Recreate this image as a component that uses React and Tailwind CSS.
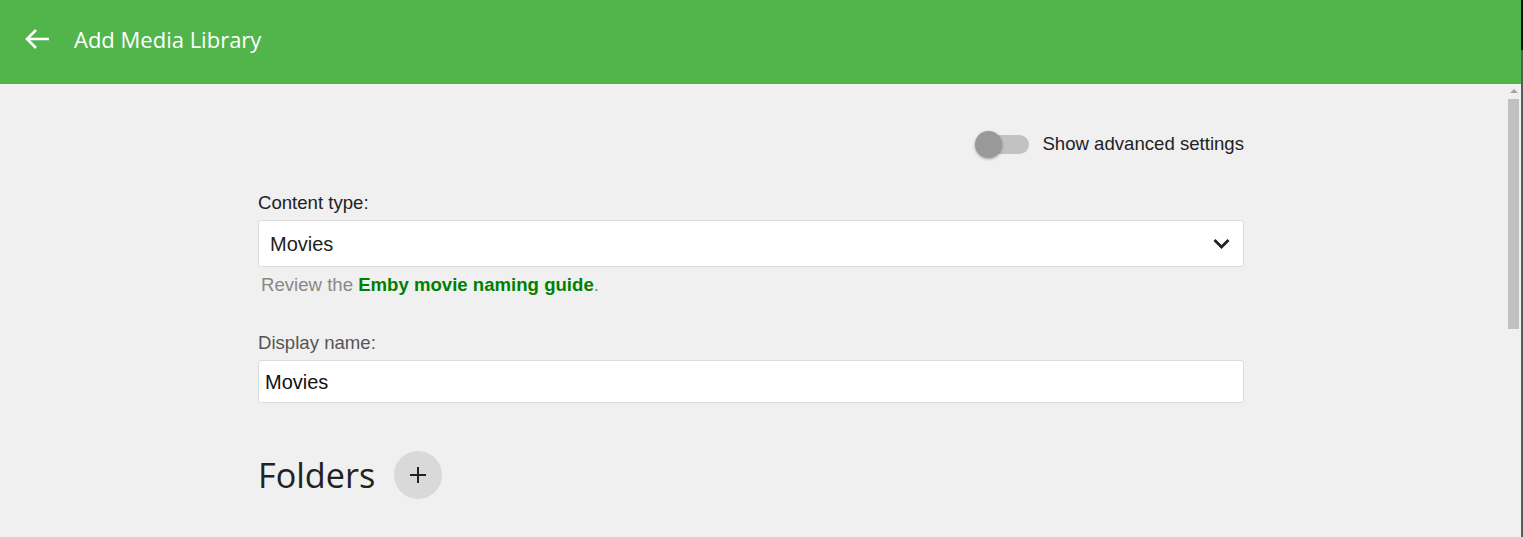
import React from "react";

export default function App() {
  return (
    <div className="w-[1523px] h-[537px] overflow-hidden flex bg-[#f0f0f0]">
      <div className="flex-1 flex flex-col min-w-0">
        <header className="h-[84px] shrink-0 bg-[#52b54b] flex items-center pl-[25px]">
          <svg width="25" height="22" viewBox="0 0 25 22" className="text-white -mt-[6px]">
            <path d="M2 11H24M11 2L2 11l9 9" fill="none" stroke="currentColor" strokeWidth="2.6" strokeLinejoin="miter" />
          </svg>
          <h1 className="ml-[24px] -mt-[6px] text-white text-[22px] font-normal font-['Open_Sans',sans-serif]">
            Add Media Library
          </h1>
        </header>
        <div className="flex-1 flex min-h-0">
          <main className="flex-1 font-['Liberation_Sans',Arial,sans-serif]">
            <div className="w-[986px] ml-[258px] pt-[46px]">
              <div className="flex justify-end items-center h-[28px]">
                <div className="relative w-[54px] h-[28px] flex items-center">
                  <div className="ml-[2px] w-[52px] h-[19px] rounded-full bg-[#c2c2c2]" />
                  <div className="absolute left-0 top-[1px] w-[27px] h-[27px] rounded-full bg-[#999999] shadow-[0_1px_3px_rgba(0,0,0,0.35)]" />
                </div>
                <span className="ml-[13px] text-[18.6px] text-[#222]">Show advanced settings</span>
              </div>
              <div className="mt-[34px] text-[18.6px] text-[#222] leading-[22px]">Content type:</div>
              <div className="mt-[6px] h-[47px] bg-white border border-[#dcdcdc] rounded-[3px] flex items-center justify-between pl-[11px] pr-[13px]">
                <span className="text-[20px] text-[#222]">Movies</span>
                <svg width="17" height="11" viewBox="0 0 17 11">
                  <path d="M1.5 2l7 7 7-7" fill="none" stroke="#222" strokeWidth="2.8" />
                </svg>
              </div>
              <div className="mt-[6px] ml-[3px] text-[18.6px] text-[#888] leading-[24px]">
                Review the <span className="text-[#008000] font-bold">Emby movie naming guide</span>.
              </div>
              <div className="mt-[35px] text-[18.6px] text-[#555] leading-[22px]">Display name:</div>
              <div className="mt-[6px] h-[43px] bg-white border border-[#dcdcdc] rounded-[3px] flex items-center pl-[6px]">
                <span className="text-[20px] text-[#111]">Movies</span>
              </div>
              <div className="mt-[48px] flex items-center">
                <h2 className="text-[34.2px] text-[#222] font-['Open_Sans',sans-serif] font-medium leading-[48px]">Folders</h2>
                <div className="ml-[19px] w-[48px] h-[48px] rounded-full bg-[#d9d9d9] flex items-center justify-center">
                  <svg width="18" height="18" viewBox="0 0 18 18">
                    <path d="M9 1v16M1 9h16" stroke="#222" strokeWidth="2" />
                  </svg>
                </div>
              </div>
            </div>
          </main>
          <div className="w-[15px] shrink-0 flex flex-col items-center pt-[5px]">
            <div className="w-0 h-0 border-l-[4px] border-r-[4px] border-b-[4px] border-l-transparent border-r-transparent border-b-[#a3a3a3]" />
            <div className="mt-[6px] w-[11px] h-[230px] bg-[#c1c1c1]" />
          </div>
        </div>
      </div>
      <div className="w-[2px] shrink-0 flex flex-col">
        <div className="h-[50px] bg-[#111]" />
        <div className="flex-1 bg-[#5a5a5a]" />
      </div>
    </div>
  );
}
